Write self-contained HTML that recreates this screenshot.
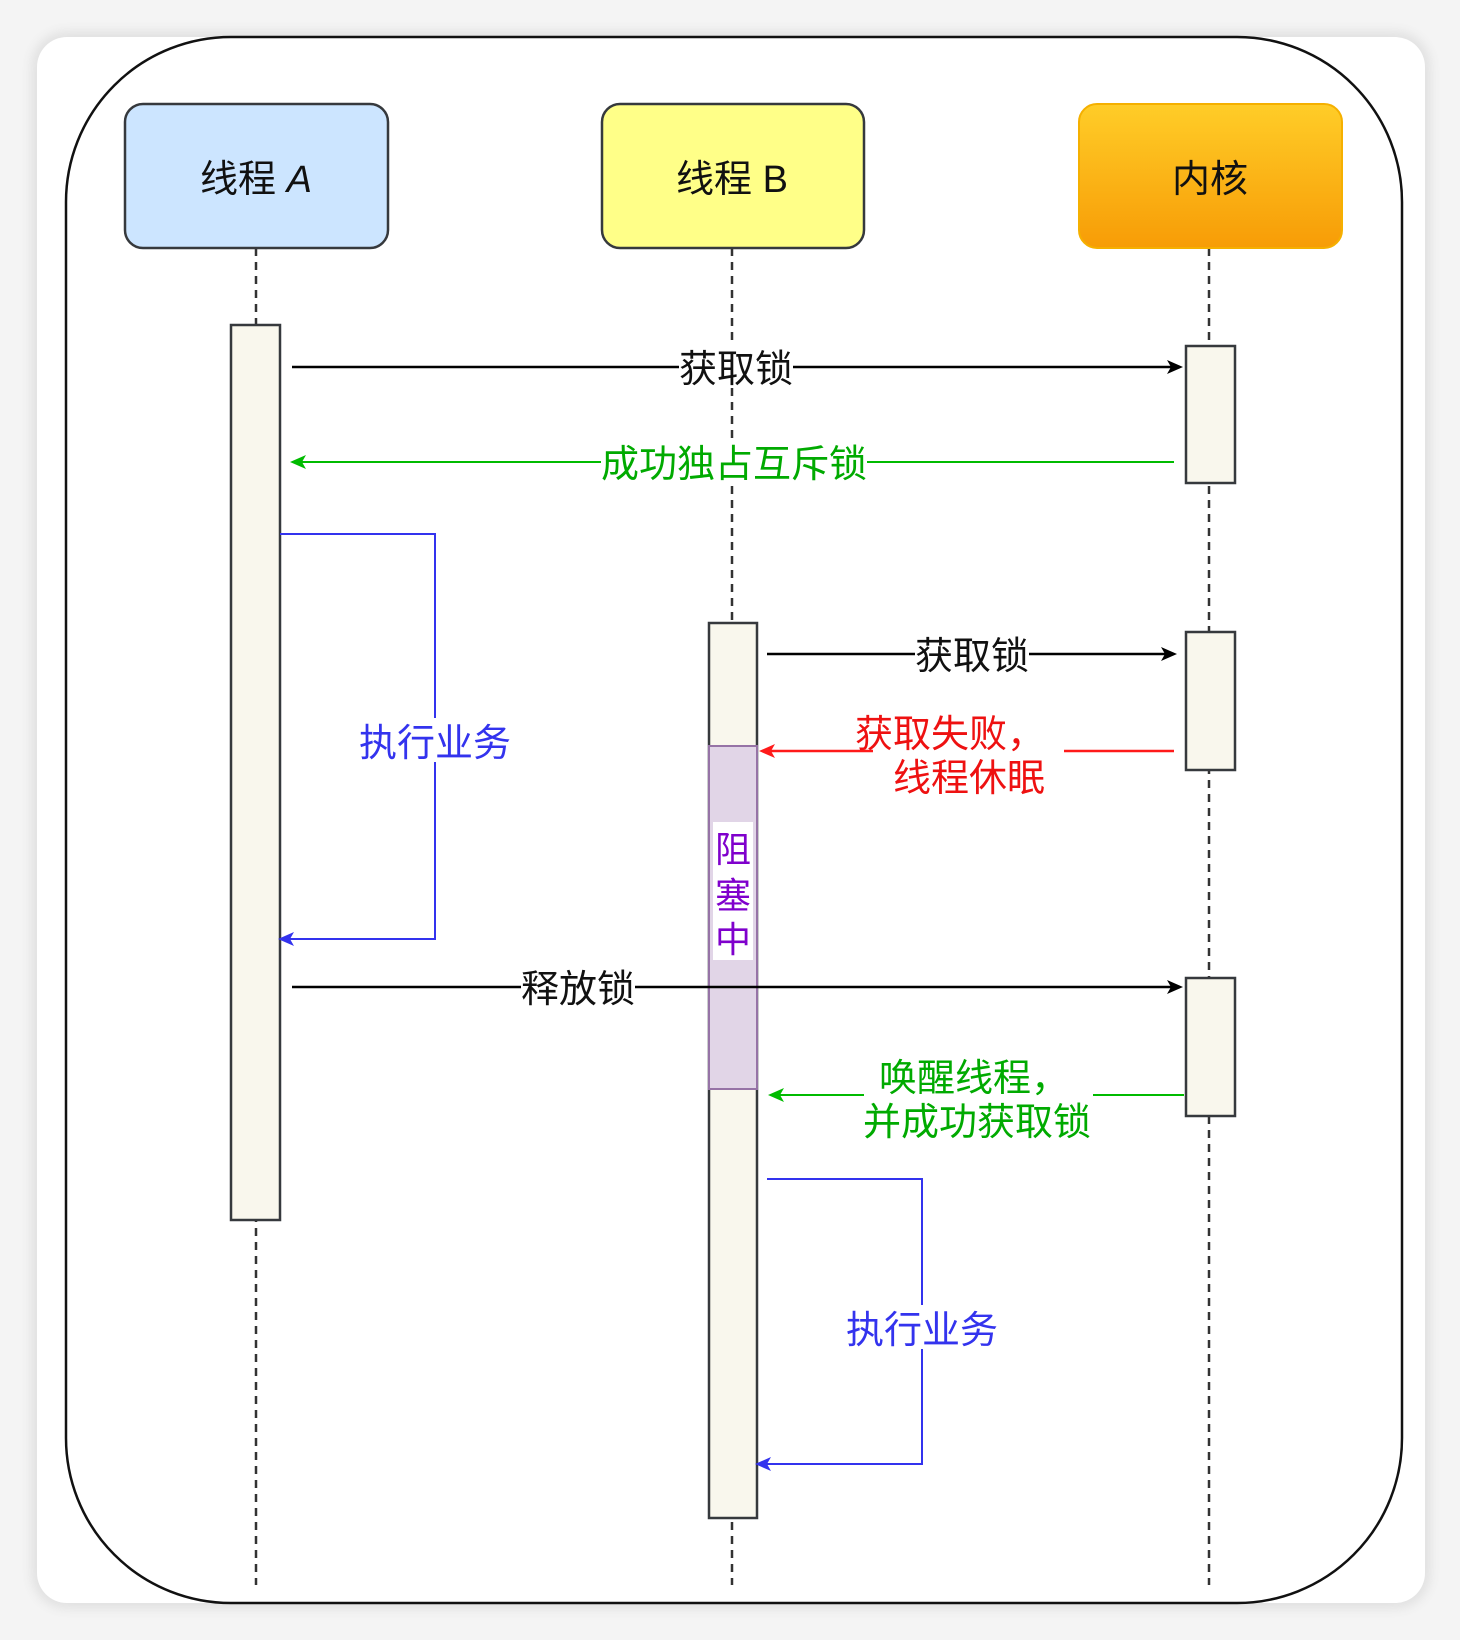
<!DOCTYPE html>
<html><head><meta charset="utf-8"><style>
html,body{margin:0;padding:0;background:#f4f4f4;}
body{width:1460px;height:1640px;overflow:hidden;position:relative;}
.card{position:absolute;left:37px;top:37px;width:1388px;height:1566px;background:#fff;border-radius:30px;box-shadow:0 0 10px 6px #e2e2e2;}
svg{position:absolute;left:0;top:0;}
text{font-family:"Liberation Sans","Noto Sans CJK SC",sans-serif;}
</style></head><body>
<div class="card"></div>
<svg width="1460" height="1640" viewBox="0 0 1460 1640">
<defs>
<linearGradient id="og" x1="0" y1="0" x2="0" y2="1"><stop offset="0" stop-color="#ffcd28"/><stop offset="1" stop-color="#f79c06"/></linearGradient>
<marker id="ak" markerWidth="16" markerHeight="16" refX="13" refY="8" orient="auto" markerUnits="userSpaceOnUse"><path d="M0,1 L16,8 L0,15 L4,8 Z" fill="#000"/></marker>
<marker id="ag" markerWidth="16" markerHeight="16" refX="13" refY="8" orient="auto" markerUnits="userSpaceOnUse"><path d="M0,1 L16,8 L0,15 L4,8 Z" fill="#00bb00"/></marker>
<marker id="ar" markerWidth="16" markerHeight="16" refX="13" refY="8" orient="auto" markerUnits="userSpaceOnUse"><path d="M0,1 L16,8 L0,15 L4,8 Z" fill="#ff1a1a"/></marker>
<marker id="ab" markerWidth="16" markerHeight="16" refX="13" refY="8" orient="auto" markerUnits="userSpaceOnUse"><path d="M0,1 L16,8 L0,15 L4,8 Z" fill="#3333ee"/></marker>
</defs>
<rect x="66" y="37" width="1336" height="1566" rx="165" ry="165" fill="none" stroke="#111" stroke-width="2.5"/>
<g stroke="#333" stroke-width="2.5" stroke-dasharray="8,6">
<line x1="256" y1="248" x2="256" y2="1585"/>
<line x1="732" y1="248" x2="732" y2="1585"/>
<line x1="1209" y1="248" x2="1209" y2="1585"/>
</g>
<rect x="125" y="104" width="263" height="144" rx="18" fill="#cce5ff" stroke="#36393d" stroke-width="2.5"/>
<rect x="602" y="104" width="262" height="144" rx="18" fill="#ffff88" stroke="#36393d" stroke-width="2.5"/>
<rect x="1079" y="104" width="263" height="144" rx="18" fill="url(#og)" stroke="#f5b000" stroke-width="2"/>
<text x="256" y="192" font-size="38" text-anchor="middle" fill="#111">线程 <tspan font-style="italic">A</tspan></text>
<text x="732" y="192" font-size="38" text-anchor="middle" fill="#111">线程 B</text>
<text x="1210" y="192" font-size="38" text-anchor="middle" fill="#111">内核</text>
<g fill="#f9f7ed" stroke="#36393d" stroke-width="2.5">
<rect x="231" y="325" width="49" height="895"/>
<rect x="1186" y="346" width="49" height="137"/>
<rect x="1186" y="632" width="49" height="138"/>
<rect x="1186" y="978" width="49" height="138"/>
<rect x="709" y="623" width="48" height="895"/>
</g>
<rect x="709" y="746" width="48" height="343" fill="#e1d5e7" stroke="#9673a6" stroke-width="2"/>
<rect x="713" y="822" width="40" height="138" fill="#fff"/>
<g font-size="36" fill="#7f00cc" text-anchor="middle">
<text x="733" y="862">阻</text><text x="733" y="908">塞</text><text x="733" y="952">中</text>
</g>
<line x1="292" y1="367" x2="1180" y2="367" stroke="#000" stroke-width="2.5" marker-end="url(#ak)"/>
<rect x="679" y="345" width="114" height="42" fill="#fff"/>
<text x="736" y="382" font-size="38" text-anchor="middle" fill="#111">获取锁</text>

<line x1="1174" y1="462" x2="293" y2="462" stroke="#00bb00" stroke-width="2" marker-end="url(#ag)"/>
<rect x="601" y="440" width="266" height="42" fill="#fff"/>
<text x="734" y="477" font-size="38" text-anchor="middle" fill="#00aa00">成功独占互斥锁</text>

<polyline points="280,534 435,534 435,939 281,939" fill="none" stroke="#3333ee" stroke-width="2" marker-end="url(#ab)"/>
<rect x="358" y="718" width="154" height="44" fill="#fff"/>
<text x="435" y="756" font-size="38" text-anchor="middle" fill="#3333ee">执行业务</text>

<line x1="767" y1="654" x2="1174" y2="654" stroke="#000" stroke-width="2.5" marker-end="url(#ak)"/>
<rect x="915" y="632" width="114" height="42" fill="#fff"/>
<text x="972" y="669" font-size="38" text-anchor="middle" fill="#111">获取锁</text>

<line x1="873" y1="751" x2="762" y2="751" stroke="#ff1a1a" stroke-width="2.5" marker-end="url(#ar)"/>
<line x1="1064" y1="751" x2="1174" y2="751" stroke="#ff1a1a" stroke-width="2.5"/>
<text x="950" y="747" font-size="38" text-anchor="middle" fill="#ee1111">获取失败，</text>
<text x="969" y="791" font-size="38" text-anchor="middle" fill="#ee1111">线程休眠</text>

<line x1="292" y1="987" x2="1180" y2="987" stroke="#000" stroke-width="2.5" marker-end="url(#ak)"/>
<rect x="521" y="965" width="114" height="42" fill="#fff"/>
<text x="578" y="1002" font-size="38" text-anchor="middle" fill="#111">释放锁</text>

<line x1="864" y1="1095" x2="771" y2="1095" stroke="#00bb00" stroke-width="2" marker-end="url(#ag)"/>
<line x1="1093" y1="1095" x2="1184" y2="1095" stroke="#00bb00" stroke-width="2"/>
<text x="974" y="1091" font-size="38" text-anchor="middle" fill="#00aa00">唤醒线程，</text>
<text x="977" y="1135" font-size="38" text-anchor="middle" fill="#00aa00">并成功获取锁</text>

<polyline points="767,1179 922,1179 922,1464 758,1464" fill="none" stroke="#3333ee" stroke-width="2" marker-end="url(#ab)"/>
<rect x="845" y="1305" width="154" height="44" fill="#fff"/>
<text x="922" y="1343" font-size="38" text-anchor="middle" fill="#3333ee">执行业务</text>
</svg>
</body></html>
